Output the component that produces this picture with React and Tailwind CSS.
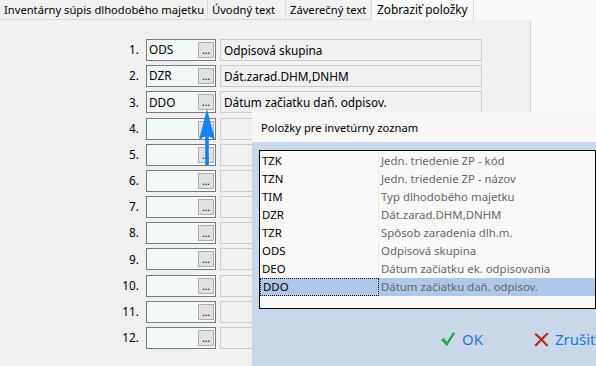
import React from "react";

const rows = [
  { code: "ODS", name: "Odpisová skupina" },
  { code: "DZR", name: "Dát.zarad.DHM,DNHM" },
  { code: "DDO", name: "Dátum začiatku daň. odpisov." },
  {}, {}, {}, {}, {}, {}, {}, {}, {},
];

const items = [
  ["TZK", "Jedn. triedenie ZP - kód"],
  ["TZN", "Jedn. triedenie ZP - názov"],
  ["TIM", "Typ dlhodobého majetku"],
  ["DZR", "Dát.zarad.DHM,DNHM"],
  ["TZR", "Spôsob zaradenia dlh.m."],
  ["ODS", "Odpisová skupina"],
  ["DEO", "Dátum začiatku ek. odpisovania"],
  ["DDO", "Dátum začiatku daň. odpisov."],
];

const tabs = [
  { label: "Inventárny súpis dlhodobého majetku", w: "w-[208px]" },
  { label: "Úvodný text", w: "w-[78px]" },
  { label: "Záverečný text", w: "w-[86px]" },
];

export default function App() {
  return (
    <div className="relative w-[596px] h-[366px] overflow-hidden bg-[#f9f9f9] text-[12px] text-black font-['Noto_Sans',sans-serif]">
      {/* tabs */}
      <div className="flex h-[20px]">
        {tabs.map((t) => (
          <div
            key={t.label}
            className={`${t.w} h-[20px] border-r border-b border-[#d9d9d9] bg-[#f0f0f0] pl-[4px] leading-[19px] text-[11.2px] whitespace-nowrap`}
          >
            {t.label}
          </div>
        ))}
        <div className="w-[102px] h-[20px] bg-[#f9f9f9] border-r border-[#d9d9d9] pl-[5px] leading-[18px] text-[11.8px] whitespace-nowrap">
          Zobraziť položky
        </div>
        <div className="flex-1" />
      </div>

      {/* panel */}
      <div className="w-[531px] h-[346px] bg-[#f0f0f0] border-r border-[#d9d9d9] pt-[19px]">
        <div className="flex flex-col justify-between h-[310px]">
          {rows.map((r, i) => (
            <div key={i} className="flex items-center h-[22px] text-[11.8px]">
              <div className="w-[140px] text-right pr-[1px]">{i + 1}.</div>
              <div className="ml-[6px] w-[70px] h-[22px] border border-[#7a7a7a] bg-[#f3f9f8] flex items-center pl-[2px] relative">
                <span>{r.code}</span>
                <div className="absolute right-[1px] top-[2px] w-[16px] h-[16px] border border-[#adadad] bg-[#e1e1e1] text-[10px] leading-[14px] text-center">
                  ...
                </div>
              </div>
              <div className="ml-[4px] w-[262px] h-[22px] border border-[#cccccc] bg-[#f0f0f0] pl-[3px] leading-[20px] whitespace-nowrap">
                {r.name || ""}
              </div>
            </div>
          ))}
        </div>
      </div>

      {/* arrow */}
      <svg className="absolute left-[198px] top-[108px]" width="18" height="58" viewBox="0 0 18 58">
        <path d="M9 1 L17 32 L10.8 28 L10.8 57 L7.2 57 L7.2 28 L1 32 Z" fill="#1583f0" />
      </svg>

      {/* popup */}
      <div className="absolute left-[252px] top-[112px] right-0 bottom-0 flex flex-col">
        <div className="h-[30px] bg-[#f7f7f7] pl-[9px] pt-[8px] text-[11.2px]">
          Položky pre invetúrny zoznam
        </div>
        <div className="flex-1 bg-[#c9d8e8] pt-[8px] pl-[7px]">
          <div className="h-[159px] border border-black bg-[#f9f9f9] pt-[1px]">
            {items.map(([c, n]) => {
              const sel = c === "DDO";
              return (
                <div key={c} className="flex h-[18px] leading-[18px] text-[11.4px]">
                  <div
                    className={`w-[119px] pl-[2px] ${
                      sel ? "bg-[#adc8e8] border border-dotted border-black leading-[16px] pl-[1px]" : "border-r border-[#ececec]"
                    }`}
                  >
                    {c}
                  </div>
                  <div className={`flex-1 pl-[2px] text-[#676767] ${sel ? "bg-[#adc8e8]" : ""}`}>{n}</div>
                </div>
              );
            })}
          </div>
          <div className="flex items-center mt-[19px] ml-[181px] text-[15px] text-[#2a78d2]">
            <svg width="16" height="16" viewBox="0 0 16 16">
              <path d="M1 9 L4 7 L7 11 L13 1 L15 2.5 L7 15 Z" fill="#22a845" />
            </svg>
            <span className="ml-[6px]">OK</span>
            <svg className="ml-[51px]" width="15" height="15" viewBox="0 0 15 15">
              <path d="M2 1 L7.5 6 L13 0.5 L14.5 2 L9 7.5 L14.5 13.5 L12.5 14.5 L7.5 9 L2 14.5 L0.5 13 L6 7.5 L0.5 2.5 Z" fill="#b02a17" />
            </svg>
            <span className="ml-[6px]">Zrušiť</span>
          </div>
        </div>
      </div>
    </div>
  );
}
